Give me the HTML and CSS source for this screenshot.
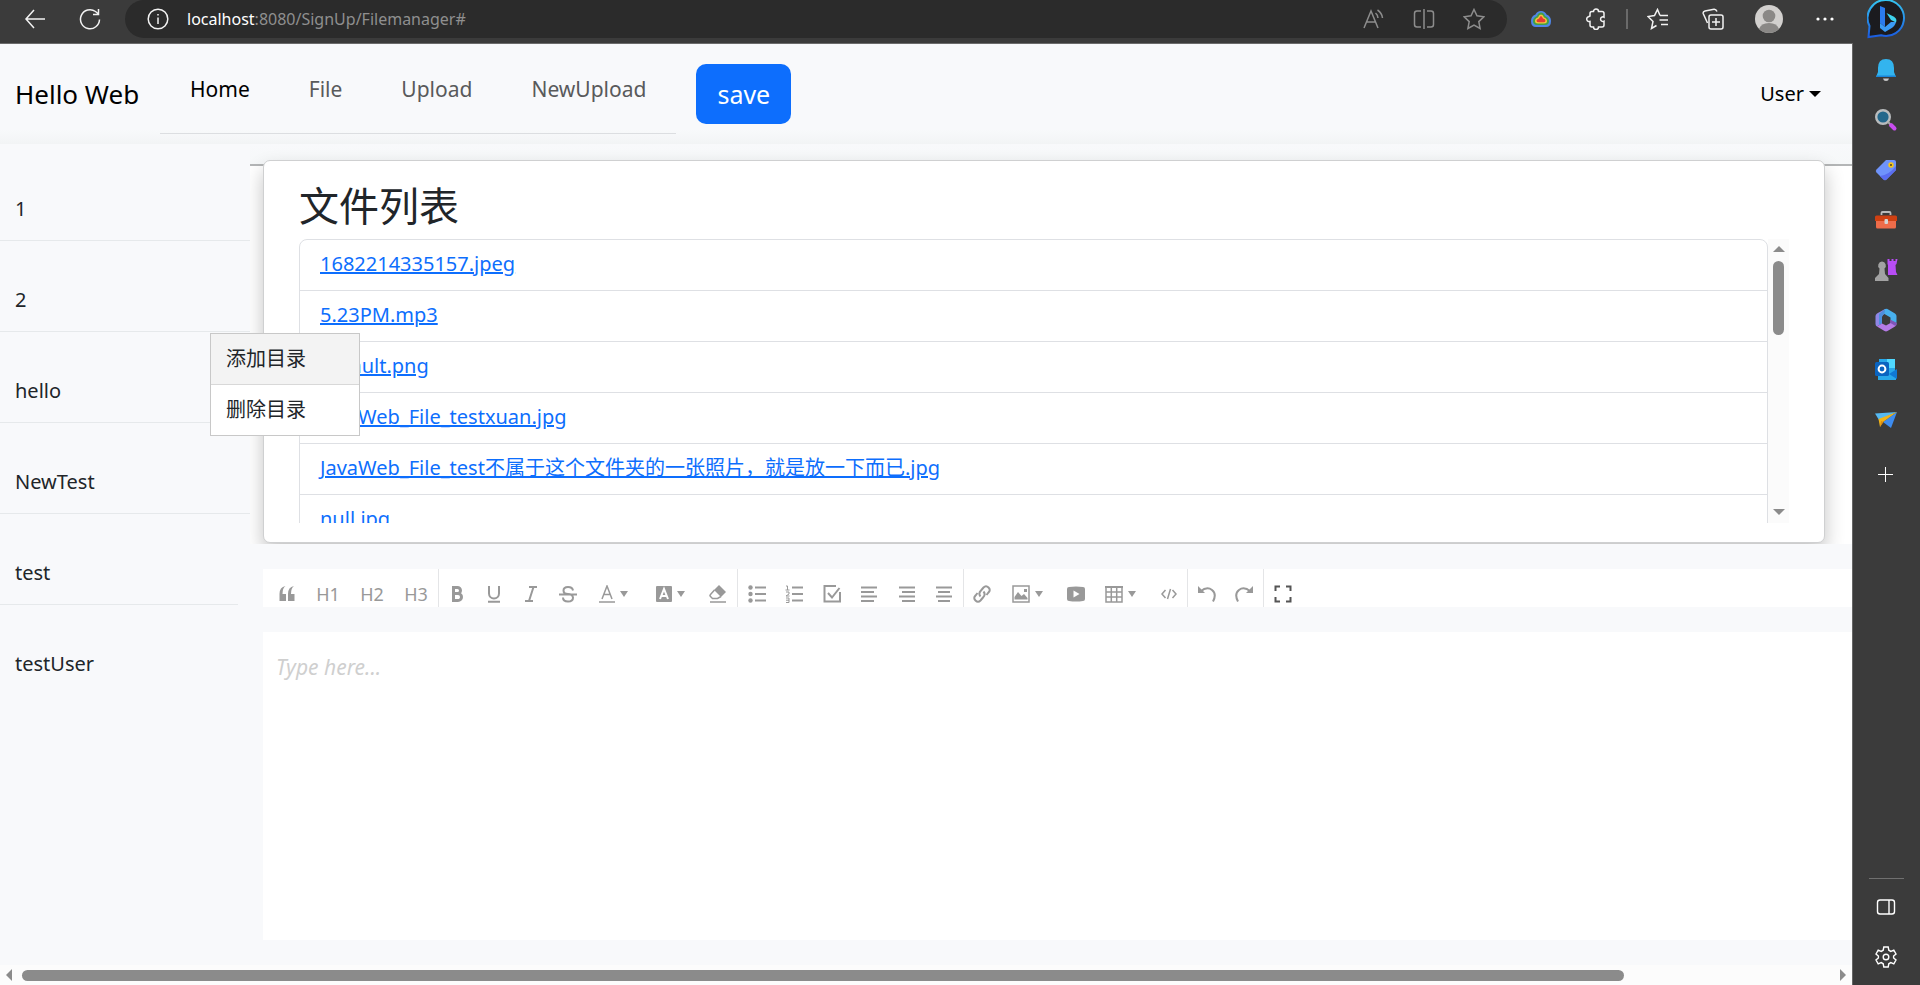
FILE: index.html
```html
<!DOCTYPE html>
<html lang="zh">
<head>
<meta charset="utf-8">
<title>Filemanager</title>
<link rel="stylesheet" href="styles.css">
</head>
<body>
<header class="browser-bar">
  <div class="browser-nav">
    <button class="chrome-btn" aria-label="Back"><svg width="22" height="22" viewBox="0 0 22 22"><path d="M10 2 2 11l8 9M2 11h19"/></svg></button>
    <button class="chrome-btn" aria-label="Refresh"><svg width="22" height="22" viewBox="0 0 22 22"><path d="M20.500 11.500a9.500 9.500 0 1 1-4-8L19.500 6M19.500 1v5.500H14"/></svg></button>
  </div>
  <div class="address">
    <svg class="info" width="22" height="22" viewBox="0 0 22 22"><circle cx="11" cy="11" r="9.800"/><path d="M11 9.500V16M11 6v1.500"/></svg>
    <span class="url"><b>localhost</b>:8080/SignUp/Filemanager#</span>
    <span class="address-tools">
      <button class="chrome-btn dim" aria-label="Read aloud"><svg width="22" height="22" viewBox="0 0 22 22"><path d="M1 20 8 3l7 17M3.500 14h9M12.500 5a7 7 0 0 1 2.500 5M14.500 2a11 11 0 0 1 5 8"/></svg></button>
      <button class="chrome-btn dim" aria-label="Split screen"><svg width="22" height="22" viewBox="0 0 22 22"><path d="M8 3H4Q1.500 3 1.500 5.500v11Q1.500 19 4 19h4M14 3h4q2.500 0 2.500 2.500v11Q20.500 19 18 19h-4M11 1v20"/></svg></button>
      <button class="chrome-btn dim" aria-label="Favorite"><svg width="22" height="22" viewBox="0 0 22 22"><path d="m11 1.500 3 6.300 6.800 1-5 4.800 1.300 6.900-6.100-3.300-6.100 3.300 1.300-6.900-5-4.800 6.800-1z"/></svg></button>
    </span>
  </div>
  <div class="browser-tools">
    <button class="chrome-btn" aria-label="Extension"><svg class="solid" width="22" height="22" viewBox="0 0 22 22"><path fill="#4f86e8" d="M5.500 6.500Q7 3 11 3t5.500 3.500Q21 8 21 13q0 6-5 6H6q-5 0-5-6 0-5 4.500-6.500z"/><path fill="#43a047" d="M7 8q1-3.500 4-3.500T15 8q4 1.500 4 5 0 4-4 4H7q-4 0-4-4 0-3.500 4-5z"/><path fill="#f6c33b" d="M8 9.500Q9 6.500 11 6.500t3 3q3 1 3 3.500 0 2.500-3 2.500H8q-3 0-3-2.500 0-2.500 3-3.500z"/><path fill="#e53935" d="M9 10.500q1-2.500 2-2.500t2 2.500q2.500.5 2.500 2.200T13 14.200H9q-2.500 0-2.500-1.500T9 10.500z"/></svg></button>
    <button class="chrome-btn" aria-label="Extensions"><svg width="22" height="22" viewBox="0 0 22 22"><path d="M8.500 3.500a2.500 2.500 0 0 1 5 0H17q2 0 2 2v3.700a2.300 2.300 0 1 0 0 4V17q0 2-2 2h-3.500a2.500 2.500 0 0 1-5 0H7q-2 0-2-2v-3.500a2.500 2.500 0 0 1-1.500-4.800L5 8V5.500q0-2 2-2z"/></svg></button>
    <span class="bar-divider"></span>
    <button class="chrome-btn" aria-label="Favorites"><svg width="22" height="22" viewBox="0 0 22 22"><path d="M13 7.500 10.500 1.500l-3 6-6.500 1 5 5-1.500 7 5-3M13 7.500h8M12.500 12H21M14 16.500h7"/></svg></button>
    <button class="chrome-btn" aria-label="Collections"><svg width="22" height="22" viewBox="0 0 22 22"><path d="M5.500 15 1.200 5.500Q.8 3.500 3 3l9-1.800Q14 1 15 3.500M9 7h10q2 0 2 2v10q0 2-2 2H9q-2 0-2-2V9q0-2 2-2zM14 10v8M10 14h8"/></svg></button>
    <button class="chrome-btn avatar-btn" aria-label="Profile"><svg class="solid" width="28" height="28" viewBox="0 0 28 28"><circle cx="14" cy="14" r="14" fill="#d2d0ce"/><circle cx="14" cy="11" r="6.300" fill="#8a8886"/><path fill="#8a8886" d="M4 24q2-6 10-6t10 6q-4 4-10 4T4 24z"/></svg></button>
    <button class="chrome-btn" aria-label="More"><svg class="solid" width="22" height="22" viewBox="0 0 22 22"><g fill="#fff"><circle cx="4" cy="11" r="1.600"/><circle cx="11" cy="11" r="1.600"/><circle cx="18" cy="11" r="1.600"/></g></svg></button>
  </div>
  <button class="chrome-btn" aria-label="Bing"><svg class="solid" width="38" height="40" viewBox="0 0 38 40"><defs><linearGradient id="bg" x1="0" y1="0" x2="0" y2="1"><stop offset="0" stop-color="#35c4f0"/><stop offset="1" stop-color="#1b5ce0"/></linearGradient></defs><path fill="#1b1b1f" stroke="url(#bg)" stroke-width="2" d="M19 1a18 18 0 1 1-5 35.300L1.500 38 2.500 27A18 18 0 0 1 19 1z"/><path fill="#2b7bee" d="m13 7 5 2v19l-5-4z"/><path fill="#3fd3ee" d="m19.500 14 7 3.500q4 2 2.500 6l-5-2.500z"/><path fill="#3b9bf5" d="m13 24 5 4 6-5h5q-1 4-5 6.500L18 33l-5-4z"/></svg></button>
</header>
<div class="frame">
  <div class="page">
    <div class="app">
      <nav class="navbar">
        <a class="brand" href="#">Hello Web</a>
        <div class="tabs">
          <a class="tab active" href="#">Home</a>
          <a class="tab" href="#">File</a>
          <a class="tab" href="#">Upload</a>
          <a class="tab" href="#">NewUpload</a>
        </div>
        <button class="save">save</button>
        <button class="user">User<span class="caret"></span></button>
      </nav>
      <div class="body">
        <aside class="folders">
          <a class="folder" href="#">1</a>
          <a class="folder" href="#">2</a>
          <a class="folder" href="#">hello</a>
          <a class="folder" href="#">NewTest</a>
          <a class="folder short" href="#">test</a>
          <a class="folder last" href="#">testUser</a>
          <div class="context-menu">
            <button class="menu-item hover">添加目录</button>
            <button class="menu-item">删除目录</button>
          </div>
        </aside>
        <main class="content">
          <div class="card-zone">
            <section class="card">
              <h1 class="card-title">文件列表</h1>
              <div class="list-scroll">
                <ul class="file-list">
                  <li><a href="#">1682214335157.jpeg</a></li>
                  <li><a href="#">5.23PM.mp3</a></li>
                  <li><a href="#">default.png</a></li>
                  <li><a href="#">JavaWeb_File_testxuan.jpg</a></li>
                  <li><a href="#">JavaWeb_File_test不属于这个文件夹的一张照片，就是放一下而已.jpg</a></li>
                  <li><a href="#">null.jpg</a></li>
                </ul>
                <div class="vbar"><i class="arrow up"></i><span class="vthumb"></span><i class="arrow down"></i></div>
              </div>
            </section>
          </div>
          <div class="toolbar">
            <div class="group headings">
              <button class="tool" aria-label="Quote"><svg width="18" height="18" viewBox="0 0 18 18"><path class="f" d="M7.500 1Q4.500 3 4.500 9H8v7H1.500V9Q1.500 2 7.500 1zM16 1q-3 2-3 8h3.500v7H10V9q0-7 6-8z"/></svg></button>
              <button class="tool wide">H1</button>
              <button class="tool wide">H2</button>
              <button class="tool wide">H3</button>
            </div>
            <div class="group marks">
              <button class="tool" aria-label="Bold"><svg class="heavy" width="18" height="18" viewBox="0 0 18 18"><path d="M5.500 2.500h4a3 3 0 0 1 0 6h-4zM5.500 8.500h4.500a3.500 3.500 0 0 1 0 7H5.500z"/></svg></button>
              <button class="tool" aria-label="Underline"><svg width="18" height="18" viewBox="0 0 18 18"><path d="M4 1v7.500a5 5 0 0 0 10 0V1M3 16.800h12"/></svg></button>
              <button class="tool" aria-label="Italic"><svg width="18" height="18" viewBox="0 0 18 18"><path d="M7 2h8M3 16h8M11.500 2 7 16"/></svg></button>
              <button class="tool" aria-label="Strikethrough"><svg width="18" height="18" viewBox="0 0 18 18"><path d="M14 5.500Q13.500 2 9 2T4.500 5.500Q4.500 9 9 9t5 3.700Q14 16.500 9 16.500T4 12.500M0 9.500h18"/></svg></button>
              <button class="tool drop" aria-label="Text color"><svg width="16" height="18" viewBox="0 0 16 18"><path class="thin" d="M3 14 8 1l5 13M5 9.500h6M0 17h16"/></svg><i class="tri"></i></button>
              <button class="tool drop" aria-label="Highlight"><svg width="16" height="18" viewBox="0 0 16 18"><rect class="f" y="1" width="16" height="16" rx="1"/><path class="white" d="M4 14 8 4l4 10M5.500 11h5"/></svg><i class="tri"></i></button>
              <button class="tool" aria-label="Eraser"><svg width="18" height="18" viewBox="0 0 18 18"><path class="f" d="m10 0 7 7-5 5-7-7z"/><path class="thin" d="M5.500 5 1.500 9.500q-1 1 0 2l2 2h5l3.500-2M1 17h16"/></svg></button>
            </div>
            <div class="group lists">
              <button class="tool" aria-label="Bullets"><svg width="18" height="18" viewBox="0 0 18 18"><g class="f"><circle cx="2.500" cy="2.500" r="2.200"/><circle cx="2.500" cy="9" r="2.200"/><circle cx="2.500" cy="15.500" r="2.200"/></g><path d="M7 2.500h11M7 9h11M7 15.500h11"/></svg></button>
              <button class="tool" aria-label="Numbers"><svg width="18" height="18" viewBox="0 0 18 18"><path d="M7 2.500h11M7 9h11M7 15.500h11"/><path class="hair" d="M1 1h1.500v4M.5 5h4M1 7h3v2L1 11h3.500M1 13h3v4.500H1M1 15.200h3"/></svg></button>
              <button class="tool" aria-label="Checklist"><svg width="18" height="18" viewBox="0 0 18 18"><path d="M13 1H1.500v15.500H17V7M5 8l4 4.500L16.500 3"/></svg></button>
              <button class="tool" aria-label="Align left"><svg width="18" height="18" viewBox="0 0 18 18"><path d="M1 2.500h16M1 7h13M1 11.500h16M1 16h13"/></svg></button>
              <button class="tool" aria-label="Align right"><svg width="18" height="18" viewBox="0 0 18 18"><path d="M1 2.500h16M4 7h13M1 11.500h16M4 16h13"/></svg></button>
              <button class="tool" aria-label="Align center"><svg width="18" height="18" viewBox="0 0 18 18"><path d="M1 2.500h16M3 7h12M1 11.500h16M3 16h12"/></svg></button>
            </div>
            <div class="group inserts">
              <button class="tool" aria-label="Link"><svg width="18" height="18" viewBox="0 0 18 18"><path d="M7.500 11.500Q5 8.500 8 5.500l2.500-3Q13 0 15.500 2.500t0 5l-2 2.500M10.500 6.500q2.500 3-.5 6l-2.500 3Q5 18 2.500 15.500t0-5l2-2.500"/></svg></button>
              <button class="tool drop" aria-label="Image"><svg width="18" height="18" viewBox="0 0 18 18"><path class="thin" d="M1 1h16v16H1z"/><path class="f" d="M2.500 14.500V12L6 7l3.500 4L12 9l3.500 4v1.500zM12 4h3v3h-3z"/></svg><i class="tri"></i></button>
              <button class="tool" aria-label="Video"><svg width="18" height="18" viewBox="0 0 18 18"><path class="f" d="M2 2q7-1 14 0 2 0 2 2v10q0 2-2 2-7 1-14 0-2 0-2-2V4q0-2 2-2z"/><path class="play" d="m6.500 5.500 6 3.500-6 3.500z"/></svg></button>
              <button class="tool drop" aria-label="Table"><svg width="18" height="18" viewBox="0 0 18 18"><path class="thin" d="M1 2h16v15H1zM1 7h16M1 12h16M6.300 2v15M11.700 2v15"/><path d="M0 2h18"/></svg><i class="tri"></i></button>
              <button class="tool" aria-label="Code"><svg width="18" height="18" viewBox="0 0 18 18"><path class="thin" d="M5.500 5 2 9l3.500 4M12.500 5 16 9l-3.500 4M10.500 4l-3 10"/></svg></button>
            </div>
            <div class="group history">
              <button class="tool" aria-label="Undo"><svg width="18" height="18" viewBox="0 0 18 18"><path d="M2.500 6.500Q9 1 14 5t1 11.500"/><path class="f" d="M0 1v7h7z"/></svg></button>
              <button class="tool" aria-label="Redo"><svg width="18" height="18" viewBox="0 0 18 18"><path d="M15.500 6.500Q9 1 4 5t-1 11.500"/><path class="f" d="M18 1v7h-7z"/></svg></button>
            </div>
            <div class="group full">
              <button class="tool dark" aria-label="Fullscreen"><svg width="18" height="18" viewBox="0 0 18 18"><path d="M6 1.500H1.500V6M12 1.500h4.500V6M6 16.500H1.500V12M12 16.500h4.500V12"/></svg></button>
            </div>
          </div>
          <textarea class="editor" aria-label="Content" placeholder="Type here..."></textarea>
        </main>
      </div>
    </div>
    <div class="hbar"><i class="arrow left"></i><div class="htrack"><span class="hthumb"></span></div><i class="arrow right"></i></div>
  </div>
  <aside class="edge-bar">
    <button class="side" aria-label="Notifications"><svg width="24" height="24" viewBox="0 0 24 24"><path fill="#33b4ee" d="M12 1q8 0 8 9v4l2 5H2l2-5v-4q0-9 8-9z"/><path fill="#1b86d8" d="M2.500 17.500h19L22 19H2z"/><path fill="#c9c9c9" d="M9 20.500h6q-.5 2.500-3 2.500t-3-2.500z"/></svg></button>
    <button class="side" aria-label="Search"><svg width="24" height="24" viewBox="0 0 24 24"><circle cx="9" cy="9" r="6.800" fill="#24688c" stroke="#b9bcbe" stroke-width="2.400"/><path stroke="#c94cf0" stroke-width="4" stroke-linecap="round" d="m17 17 3.500 3.500"/><path stroke="#aaa" stroke-width="2" d="m14 14 2 2"/></svg></button>
    <button class="side" aria-label="Shopping"><svg width="24" height="24" viewBox="0 0 24 24"><path fill="#6f93fa" d="M12 2h8q2 0 2 2v8L12.500 21.500q-1.500 1.500-3 0l-7-7q-1.500-1.500 0-3z"/><path fill="#5a6df0" d="m22 12-9.500 9.500q-1.500 1.500-3 0L6 18q9-1 16-10z"/><circle cx="17" cy="7" r="1.800" fill="#333" stroke="#f5c518" stroke-width="1.800"/></svg></button>
    <button class="side" aria-label="Tools"><svg width="24" height="24" viewBox="0 0 24 24"><path fill="none" stroke="#b9b9b9" stroke-width="1.800" d="M7.500 7V5q0-1 1-1h7q1 0 1 1v2"/><path fill="#ee6c4a" d="M2 12h20v7q0 1.500-1.500 1.500h-17Q2 20.500 2 19z"/><path fill="#cf4012" d="M2.500 7.500h19q1.500 0 1.500 1.500v4H1V9q0-1.500 1.500-1.500z"/><rect x="10.500" y="11" width="3.500" height="5" rx="1" fill="#d5d5d5"/></svg></button>
    <button class="side" aria-label="Games"><svg width="24" height="24" viewBox="0 0 24 24"><path fill="#b84df5" d="M13.500 1h2v2h2V1h2v2h2V1h2l-1 5-1 1 .5 7 1.500 3H14V7l-.5-1z"/><path fill="#a2a2a2" d="M8 3.500a4 4 0 0 1 2.500 7l.5 5.500 3.500 4v3H1v-3L5 16l.5-5.500a4 4 0 0 1 2.500-7z"/></svg></button>
    <button class="side" aria-label="Microsoft 365"><svg width="24" height="24" viewBox="0 0 24 24"><path fill="#8f86e6" d="M11 1 3 5.500Q1.500 6.500 1.500 8v8q0 1.500 1.500 2.500l5-3V9q0-1.500 1.500-2.500L13 4.500z"/><path fill="#4d8fdc" d="M5 6v11l3-1.500V9q0-1.500 1.500-2.500L13 4.500 11 1z"/><path fill="#48b0ee" d="m11 1 2-.3 8 4.800Q22.500 6.500 22.500 8v7l-6-3V9.500L10.500 6z"/><path fill="#b57be6" d="M3 18.500l5-3 4 2 4.500-2.500v-3l6 3v1q0 1.500-1.500 2.500L13.500 23q-1.500.8-3 0z"/><path fill="#7d55b8" d="m16.500 12 6 3v1q0 1-1 2l-5-3z"/></svg></button>
    <button class="side" aria-label="Outlook"><svg width="24" height="24" viewBox="0 0 24 24"><path fill="#28a8ea" d="M5 1h16v20H5z"/><path fill="#50d9ff" d="M13 1h8v9h-8z"/><path fill="#28a8ea" d="M4 13h18v9H4z"/><path fill="#0f78d4" d="m15 16 8-5v10z"/><rect x="1" y="4" width="14" height="14" rx="1.500" fill="#0a64c0"/><circle cx="8" cy="11" r="3.400" fill="none" stroke="#fff" stroke-width="2"/></svg></button>
    <button class="side" aria-label="Drop"><svg width="24" height="24" viewBox="0 0 24 24"><path fill="#55b9f2" d="M1 5.500 23 4 5 12z"/><path fill="#3d8cf0" d="M23 4 17 20 9 14z"/><path fill="#f2b418" d="M23 4 4.500 11 6 19l3-5z"/><path fill="#d98a12" d="m6 19 1-6 2.500 1z"/></svg></button>
    <button class="side plus" aria-label="Add"><svg width="24" height="24" viewBox="0 0 24 24"><path stroke="#fff" stroke-width="1" d="M4 12.500h15M11.500 5v15"/></svg></button>
    <span class="side-divider"></span>
    <button class="side" aria-label="Sidebar"><svg width="24" height="24" viewBox="0 0 24 24"><path fill="none" stroke="#fff" stroke-width="1.400" d="M6 5h12q2.500 0 2.500 2.500v9Q20.500 19 18 19H6q-2.500 0-2.500-2.500v-9Q3.500 5 6 5zM15 5v14"/></svg></button>
    <button class="side" aria-label="Settings"><svg width="24" height="24" viewBox="0 0 24 24"><g fill="none" stroke="#fff" stroke-width="1.400"><circle cx="12" cy="12" r="2.800"/><path d="M9.800 2h4.400l.6 3.200 2 1.200 3-1.200 2.200 3.800-2.400 2v2l2.400 2-2.200 3.800-3-1.200-2 1.200-.6 3.200H9.800l-.6-3.200-2-1.200-3 1.200L2 15l2.400-2v-2L2 9l2.200-3.800 3 1.200 2-1.200z"/></g></svg></button>
  </aside>
</div>
</body>
</html>
```
FILE: styles.css
```css
* { box-sizing: border-box; }
html, body { height: 100%; }
body {
  margin: 0;
  display: flex;
  flex-direction: column;
  overflow: hidden;
  background: #3b3b3b;
  color: #212529;
  font: 20px/30px "Noto Sans", "Noto Sans CJK SC", sans-serif;
}
button {
  border: 0;
  padding: 0;
  background: none;
  color: inherit;
  font: inherit;
}
a { color: inherit; text-decoration: none; }
svg { display: block; flex: none; }

/* Browser chrome */
.browser-bar {
  display: flex;
  flex: none;
  height: 43px;
  padding-right: 15px;
  align-items: flex-start;
}
.chrome-btn {
  display: flex;
  height: 38px;
  align-items: center;
  justify-content: center;
}
.chrome-btn svg, .info { fill: none; stroke: #f2f2f2; stroke-width: 1.5; }
.chrome-btn svg.solid { stroke: none; }
.chrome-btn.dim svg { stroke: #8d8d8d; }
.browser-nav { display: flex; gap: 33px; width: 125px; padding-left: 24px; }
.address {
  display: flex;
  flex: 1;
  height: 38px;
  padding: 0 22px;
  align-items: center;
  border-radius: 19px;
  background: #2b2b2b;
}
.url { margin-left: 18px; color: #8f8f8f; font-size: 16px; }
.url b { color: #fff; font-weight: 400; }
.address-tools { display: flex; gap: 28px; margin-left: auto; }
.browser-tools { display: flex; gap: 33px; padding: 0 31px 0 23px; align-items: center; }
.bar-divider { width: 2px; height: 20px; margin: 0 -14px; background: #6a6a6a; }
.avatar-btn { margin: 0 -2px; }

.frame { display: flex; flex: 1; min-height: 0; }
.page {
  display: flex;
  flex: 1;
  min-width: 0;
  flex-direction: column;
  border-top: 1px solid #6b6b6b;
  background: #f8f9fb;
}
.app { display: flex; flex: 1; min-height: 0; flex-direction: column; }

/* Navbar */
.navbar {
  display: flex;
  flex: none;
  height: 100px;
  padding: 0 31px 0 15px;
  align-items: center;
  background: linear-gradient(#f8f9fb 86%, #f2f4f5);
  color: #000;
}
.brand { width: 145px; font-size: 26px; }
.tabs {
  display: flex;
  height: 80px;
  padding: 0 30px;
  gap: 59px;
  border-bottom: 1px solid #dcdee1;
}
.tab { padding-top: 20px; color: #595a5b; font-size: 21px; }
.tab.active { color: #000; }
.save {
  height: 60px;
  margin-left: 20px;
  padding: 0 21px;
  border-radius: 10px;
  background: #0d6efd;
  color: #fff;
  font-size: 25px;
}
.user { display: flex; margin-left: auto; align-items: center; gap: 5px; }
.caret { border: 6px solid transparent; border-top-color: #000; border-bottom: 0; }

/* Folder list */
.body { display: flex; flex: 1; min-height: 0; }
.folders { position: relative; flex: none; width: 250px; padding-top: 6px; }
.folder {
  display: block;
  height: 91px;
  padding: 44px 15px 0;
  border-bottom: 1px solid #e6e9eb;
}
.folder.short { width: 238px; }
.folder.last { border-bottom: 0; }
.context-menu {
  position: absolute;
  z-index: 5;
  top: 189px;
  left: 210px;
  width: 150px;
  border: 1px solid #c8c8c8;
  background: #fff;
}
.menu-item {
  display: block;
  width: 100%;
  height: 50px;
  padding-left: 15px;
  text-align: left;
}
.menu-item.hover { height: 51px; border-bottom: 1px solid #d8d8d8; background: #f3f3f3; }

/* File card */
.content { display: flex; flex: 1; min-width: 0; flex-direction: column; }
.card-zone {
  flex: none;
  height: 400px;
  padding: 16px 27px 0 13px;
  overflow: hidden;
  background: linear-gradient(#f8f9fb, #f6f8f9 20px, #b4b6b7 20px, #b4b6b7 22px, #fff 22px);
}
.card {
  height: 383px;
  padding: 15px 35px 20px;
  border: 1px solid #cfd0d1;
  border-radius: 7px;
  background: #fff;
  box-shadow: 0 10px 20px rgba(0, 0, 0, .24);
}
.card-title { margin: 0 0 3px; font-size: 40px; font-weight: 400; line-height: 60px; }
.list-scroll { display: flex; height: 284px; overflow: hidden; }
.file-list {
  flex: 1;
  height: 320px;
  margin: 0;
  padding: 0;
  border: 1px solid #dee0e4;
  border-radius: 8px;
  list-style: none;
}
.file-list li { height: 51px; padding: 9px 20px; border-bottom: 1px solid #dee0e4; }
.file-list a { color: #0d6efd; text-decoration: underline 2px; }
.vbar {
  display: flex;
  width: 21px;
  padding: 7px 0 8px;
  flex-direction: column;
  align-items: center;
  background: #fbfbfb;
}
.vthumb { width: 11px; height: 74px; margin-top: 9px; border-radius: 6px; background: #8b8b8b; }
.arrow { border: 6px solid transparent; }
.arrow.up { border-top: 0; border-bottom-color: #8b8b8b; }
.arrow.down { margin-top: auto; border-bottom: 0; border-top-color: #8b8b8b; }
.arrow.left { border-left: 0; border-right-color: #8b8b8b; }
.arrow.right { border-right: 0; border-left-color: #8b8b8b; }

/* Editor */
.toolbar {
  display: flex;
  flex: none;
  height: 38px;
  margin: 25px 0 25px 13px;
  background: #fff;
  color: #999;
}
.group { display: flex; padding-top: 12px; border-right: 1px solid #e4e5e7; }
.tool { display: flex; flex: 38; height: 26px; align-items: center; justify-content: center; font-size: 18px; }
.tool.wide { flex: 44; }
.tool svg { fill: none; stroke: #999; stroke-width: 2; }
.tool svg.heavy { stroke-width: 3; }
.tool .f { fill: #999; stroke: none; }
.tool .thin { stroke-width: 1.5; }
.tool .hair { stroke-width: 1; }
.tool .white { stroke: #fff; }
.tool .play { fill: #fff; stroke: none; }
.tool.dark svg { stroke: #555; }
.tool.drop { flex: 55; gap: 5px; padding-right: 3px; }
.tri { border: 4px solid transparent; border-top: 6px solid #999; border-bottom: 0; }
.headings { width: 176px; padding-left: 5px; }
.marks { width: 299px; }
.lists { width: 226px; }
.inserts { width: 224px; }
.history { width: 76px; }
.full { width: 38px; border: 0; }
.editor {
  flex: 1;
  margin: 0 0 25px 13px;
  padding: 20px 13px;
  border: 0;
  outline: 0;
  resize: none;
  background: #fff;
  font: 21px/30px "Noto Sans", "Noto Sans CJK SC", sans-serif;
}
.editor::placeholder { color: #cfcfcf; font-style: italic; }

/* Horizontal scrollbar */
.hbar { display: flex; flex: none; height: 20px; padding: 0 6px; gap: 10px; align-items: center; background: #fcfcfc; }
.htrack { flex: 1; padding-right: 8px; }
.hthumb { display: block; width: 89%; height: 11px; border-radius: 6px; background: #8b8b8b; }

/* Edge sidebar */
.edge-bar {
  display: flex;
  flex: none;
  width: 68px;
  padding: 15px 1px 16px 0;
  flex-direction: column;
  align-items: center;
  gap: 26px;
  border-left: 1px solid #666;
}
.side { display: flex; }
.plus { margin-top: 4px; }
.side-divider { width: 35px; height: 1px; margin-top: auto; margin-bottom: -10px; background: #707070; }
```
